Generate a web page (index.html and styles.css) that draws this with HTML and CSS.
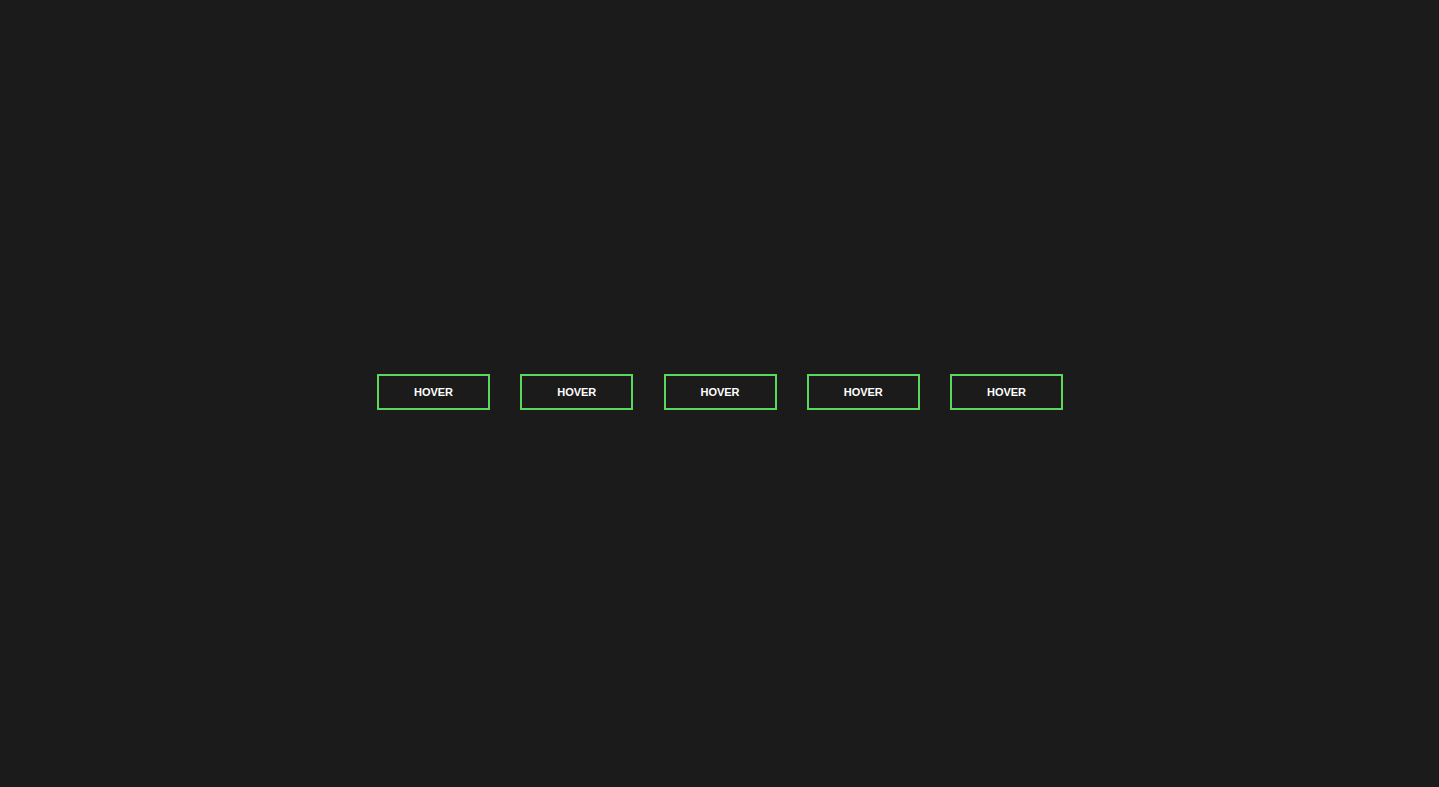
FILE: index.html
```html
<!DOCTYPE html>
<html lang="en">
<head>
<meta charset="utf-8">
<title>Hover</title>
<link rel="stylesheet" href="styles.css">
</head>
<body>
  <main class="stage">
    <button class="btn">HOVER</button>
    <button class="btn">HOVER</button>
    <button class="btn">HOVER</button>
    <button class="btn">HOVER</button>
    <button class="btn">HOVER</button>
  </main>
</body>
</html>
```
FILE: styles.css
```css
html, body {
  margin: 0;
  padding: 0;
  height: 100%;
}
body {
  background: #1b1b1b;
  font-family: "Liberation Sans", Arial, sans-serif;
}
.stage {
  height: 100%;
  display: flex;
  align-items: center;
  justify-content: center;
  gap: 30.25px;
  padding: 0 0 4px 1px;
  box-sizing: border-box;
}
.btn {
  width: 113px;
  height: 36px;
  box-sizing: border-box;
  background: transparent;
  border: 2px solid #5cd65c;
  color: #ffffff;
  font-family: "Liberation Sans", Arial, sans-serif;
  font-weight: bold;
  font-size: 11px;
  padding: 0;
  cursor: pointer;
}
```
